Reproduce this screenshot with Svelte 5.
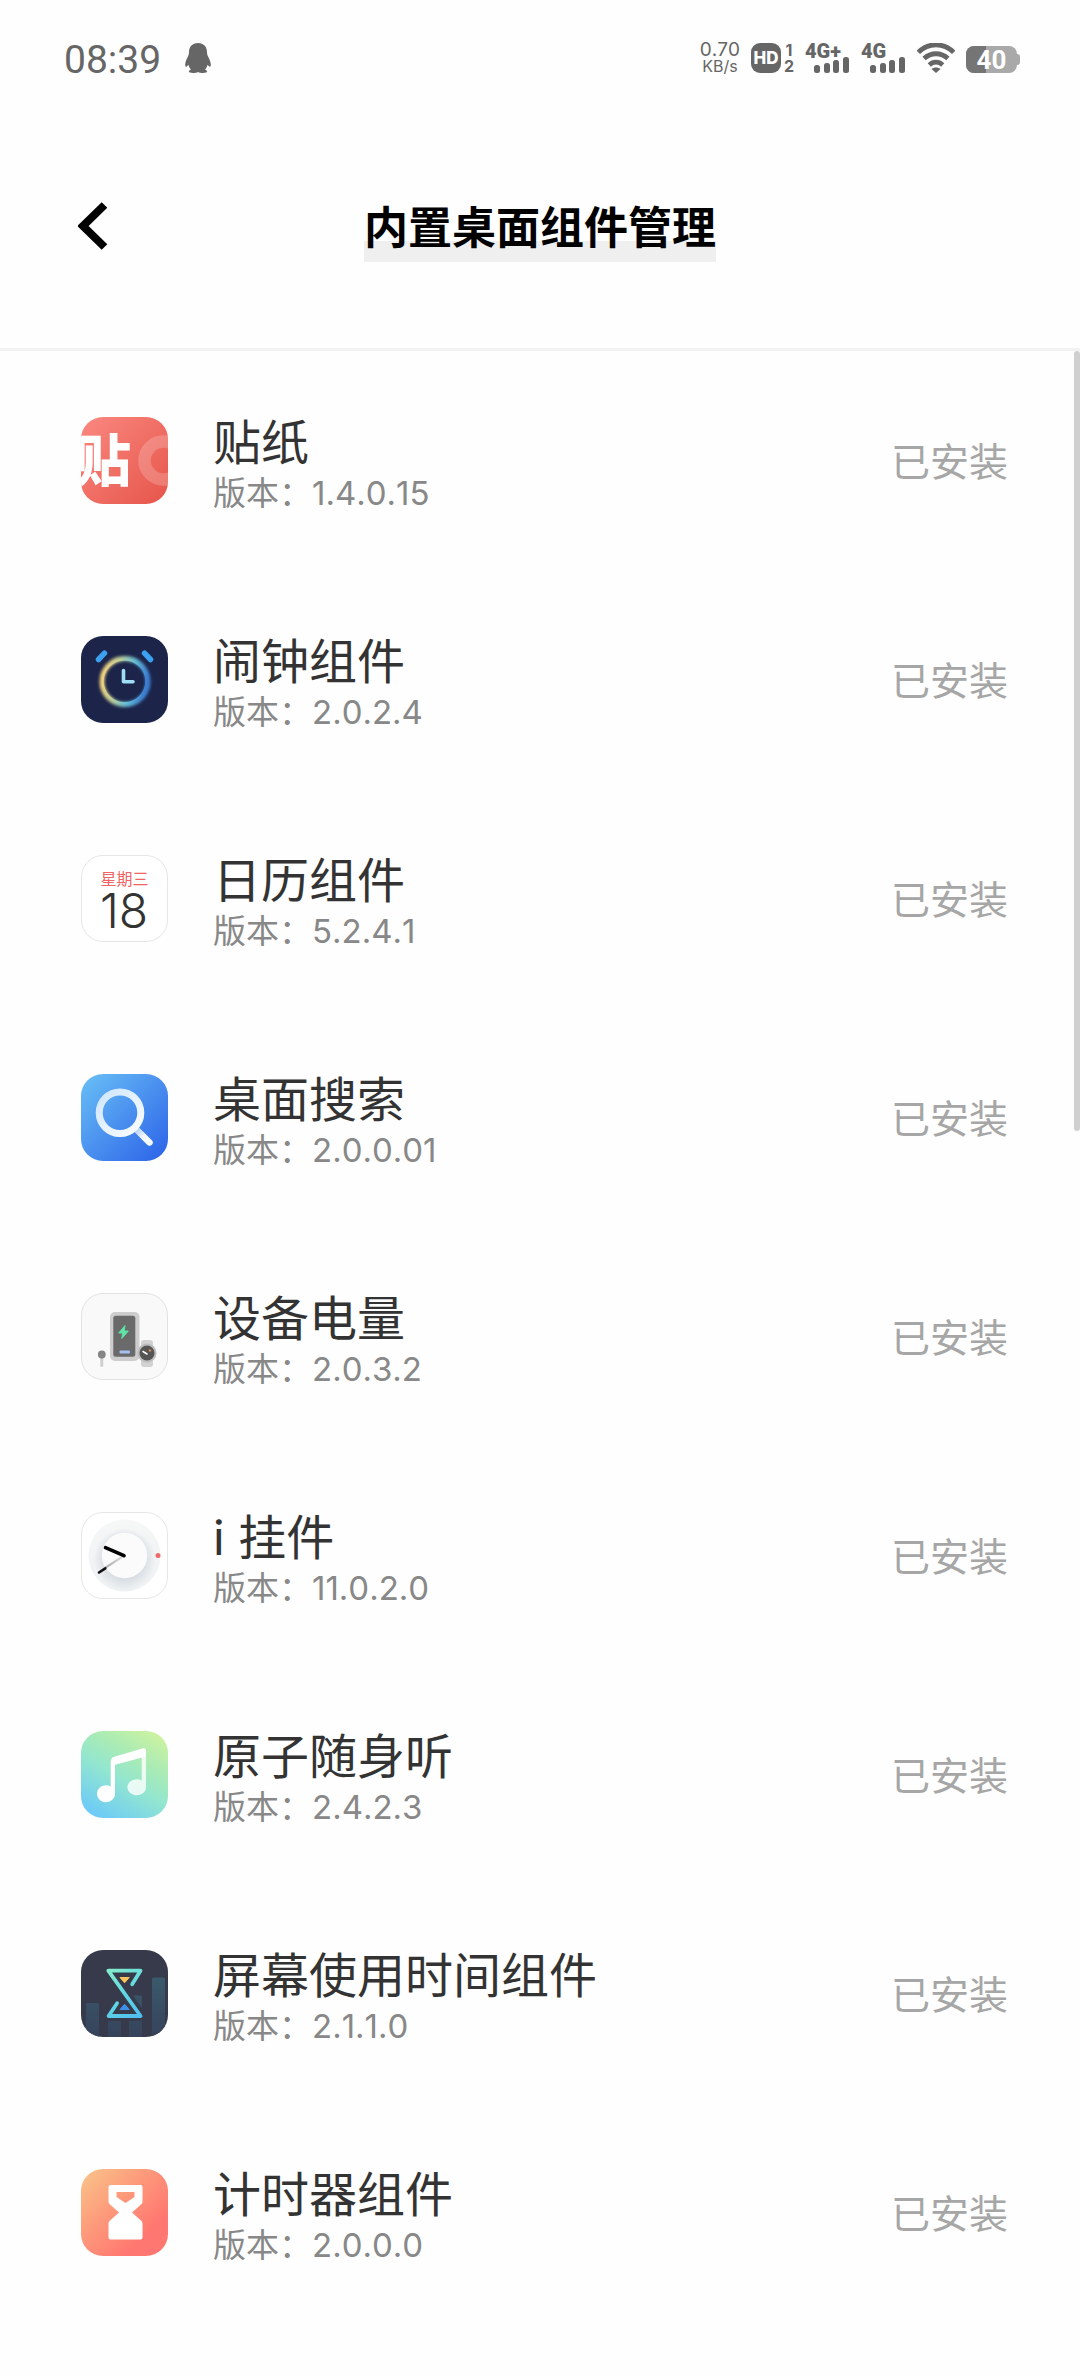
<script lang="ts">
  interface WidgetItem {
    id: string;
    name: string;
    version: string;
  }

  const widgets: WidgetItem[] = [
    { id: 'sticker', name: '贴纸', version: '1.4.0.15' },
    { id: 'alarm', name: '闹钟组件', version: '2.0.2.4' },
    { id: 'calendar', name: '日历组件', version: '5.2.4.1' },
    { id: 'search', name: '桌面搜索', version: '2.0.0.01' },
    { id: 'battery', name: '设备电量', version: '2.0.3.2' },
    { id: 'clock', name: 'i 挂件', version: '11.0.2.0' },
    { id: 'music', name: '原子随身听', version: '2.4.2.3' },
    { id: 'screentime', name: '屏幕使用时间组件', version: '2.1.1.0' },
    { id: 'timer', name: '计时器组件', version: '2.0.0.0' },
  ];

  const signals = ['4G+', '4G'];
</script>

<div class="page">
  <div class="status-bar">
    <span class="time">08:39</span>
    <svg class="penguin" viewBox="0 0 26 30" width="26" height="30">
      <path d="M13 0C7.500 0 4 3.800 4 9c0 1.200-.1 2.300-.6 3.400C2 15.400.2 18.500.2 21.500c0 1.300.3 2.300.8 2.300.8 0 1.700-1.200 2.400-2 .5 1.900 1.300 3.500 2.500 4.800-1.300.5-2 1.200-2 2 0 1.100 1.500 1.400 4 1.400 2.300 0 4-.3 5.100-1 1.100.7 2.800 1 5.100 1 2.500 0 4-.3 4-1.400 0-.8-.7-1.500-2-2 1.200-1.300 2-2.900 2.500-4.800.7.800 1.600 2 2.400 2 .5 0 .8-1 .8-2.300 0-3-1.800-6.100-3.200-9.100C22.100 11.300 22 10.200 22 9c0-5.200-3.500-9-9-9z" fill="#666" />
    </svg>

    <div class="indicators">
      <div class="speed">
        <span class="rate">0.70</span>
        <span class="unit">KB/s</span>
      </div>

      <div class="hd">
        <span class="hd-badge">HD</span>
        <span class="sims"><span>1</span><span>2</span></span>
      </div>

      {#each signals as label}
        <svg class="signal" viewBox="0 0 45 30" width="45" height="30">
          <text x="0" y="15" class="signal-label">{label}</text>
          <rect x="9" y="22" width="6" height="8" rx="2.500" />
          <rect x="19" y="20" width="6" height="10" rx="2.500" />
          <rect x="28" y="17" width="6" height="13" rx="2.500" />
          <rect x="38" y="14" width="6" height="16" rx="2.500" />
        </svg>
      {/each}

      <svg class="wifi" viewBox="0 0 38 30" width="38" height="30" fill="none" stroke="#666" stroke-width="4.800">
        <path d="M1.300 9.300C11.500-.7 26.500-.7 36.700 9.300" />
        <path d="M7.100 15.600c6.900-6.500 16.900-6.500 23.800 0" />
        <path d="M12.300 21.900c3.900-3.600 9.500-3.600 13.400 0" />
        <path d="M14.500 26c2.600-2 6.400-2 9 0L19 30z" fill="#666" stroke="none" />
      </svg>

      <div class="battery">
        <span class="battery-level" style="width: 40%"></span>
        <span class="battery-text">40</span>
      </div>
    </div>
  </div>

  <header class="header">
    <button class="back" aria-label="返回">
      <svg viewBox="0 0 30 48" width="30" height="48">
        <path d="M26.500 3 5 24l21.500 21" fill="none" stroke="#000" stroke-width="8" />
      </svg>
    </button>
    <h1 class="title">内置桌面组件管理</h1>
  </header>

  <main class="content">
    <ul class="list">
      {#each widgets as widget (widget.id)}
        <li class="row">
          <svg class="icon" viewBox="0 0 87 87" width="87" height="87" aria-hidden="true">
            {#if widget.id === 'sticker'}
              <defs>
                <linearGradient id="sticker-bg" x1="0" y1="0" x2="1" y2="1">
                  <stop offset="0" stop-color="#fa8880" />
                  <stop offset="1" stop-color="#e6554a" />
                </linearGradient>
                <clipPath id="sticker-clip"><rect width="87" height="87" rx="22" /></clipPath>
              </defs>
              <g clip-path="url(#sticker-clip)">
                <rect width="87" height="87" fill="url(#sticker-bg)" />
                <circle cx="82.500" cy="43.500" r="19" fill="none" stroke="#fff" stroke-opacity=".2" stroke-width="12.500" />
                <text x="-6" y="64" class="sticker-char">贴</text>
              </g>
            {:else if widget.id === 'alarm'}
              <defs>
                <linearGradient id="alarm-ring" x1="0" y1=".3" x2="1" y2=".5">
                  <stop offset="0" stop-color="#f2cf7c" />
                  <stop offset=".3" stop-color="#c3cf95" />
                  <stop offset=".65" stop-color="#65bfd6" />
                  <stop offset="1" stop-color="#3c7fd6" />
                </linearGradient>
                <filter id="alarm-glow" x="-30%" y="-30%" width="160%" height="160%">
                  <feGaussianBlur stdDeviation="1.800" />
                </filter>
              </defs>
              <rect width="87" height="87" rx="22" fill="#1c2449" />
              <circle cx="44" cy="45.500" r="23" fill="none" stroke="url(#alarm-ring)" stroke-width="5" filter="url(#alarm-glow)" />
              <circle cx="43.500" cy="45.300" r="21.800" fill="none" stroke="url(#alarm-ring)" stroke-width="2" />
              <path d="M17.500 23.500l6-6.300M63.500 17.200l6 6.300" stroke="#3ba0f0" stroke-width="5.500" stroke-linecap="round" />
              <path d="M42.500 34.500v11.200H52" fill="none" stroke="#9fdcf5" stroke-width="3.600" stroke-linecap="round" stroke-linejoin="round" />
            {:else if widget.id === 'calendar'}
              <rect x=".5" y=".5" width="86" height="86" rx="21.500" fill="#fff" stroke="#e6e6e6" />
              <text x="43.500" y="30" class="calendar-week">星期三</text>
              <text x="43" y="73" class="calendar-day">18</text>
            {:else if widget.id === 'search'}
              <defs>
                <linearGradient id="search-bg" x1="0" y1="0" x2="1" y2="1">
                  <stop offset="0" stop-color="#69c0f6" />
                  <stop offset=".5" stop-color="#4a90ef" />
                  <stop offset="1" stop-color="#2b62e8" />
                </linearGradient>
                <linearGradient id="search-lens" x1="0" y1="0" x2="1" y2="1">
                  <stop offset="0" stop-color="#cfe6fd" />
                  <stop offset="1" stop-color="#fbfdff" />
                </linearGradient>
                <linearGradient id="search-handle" x1="0" y1="0" x2="1" y2="1">
                  <stop offset="0" stop-color="#a9ccf8" />
                  <stop offset=".6" stop-color="#f4f9ff" />
                </linearGradient>
              </defs>
              <rect width="87" height="87" rx="22" fill="url(#search-bg)" />
              <path d="M54.500 54.500l14 14" stroke="url(#search-handle)" stroke-width="6.500" stroke-linecap="round" />
              <circle cx="39" cy="38.700" r="20.800" fill="none" stroke="url(#search-lens)" stroke-width="7" />
            {:else if widget.id === 'battery'}
              <rect x=".5" y=".5" width="86" height="86" rx="21.500" fill="#f9f9f9" stroke="#e2e2e2" />
              <rect x="29" y="19" width="29.500" height="49" rx="5" fill="#cdcdcd" />
              <rect x="32.300" y="22.700" width="22" height="41" rx="2.500" fill="#6a6a6a" />
              <path d="M44 32.500l-6.300 7.500h4l-.9 5.500 6.500-7.500h-4.200z" fill="#5fe5a5" stroke="#5fe5a5" stroke-linejoin="round" />
              <rect x="38.500" y="57.500" width="10.500" height="3" rx="1" fill="#a5c0f0" />
              <rect x="60" y="47" width="12" height="27" rx="3" fill="#d2d2d2" />
              <circle cx="66" cy="60" r="9.500" fill="#bdbdbd" />
              <circle cx="66" cy="60" r="7.500" fill="#555" />
              <path d="M62 58.500l4 2.500" stroke="#fff" stroke-width="1.500" stroke-linecap="round" />
              <circle cx="69" cy="57.500" r="1.200" fill="#d58a50" />
              <rect x="19.300" y="63" width="3" height="11" rx="1.500" fill="#cfcfcf" />
              <circle cx="20.800" cy="61.500" r="3.900" fill="#858585" />
            {:else if widget.id === 'clock'}
              <defs>
                <linearGradient id="clock-face" x1="0" y1="0" x2="0" y2="1">
                  <stop offset="0" stop-color="#f6f7f7" />
                  <stop offset="1" stop-color="#eef1f3" />
                </linearGradient>
                <radialGradient id="clock-shadow">
                  <stop offset=".65" stop-color="#d5dce2" stop-opacity=".9" />
                  <stop offset="1" stop-color="#d5dce2" stop-opacity="0" />
                </radialGradient>
                <linearGradient id="clock-minute" x1="1" y1="0" x2="0" y2="1">
                  <stop offset="0" stop-color="#ddd" />
                  <stop offset="1" stop-color="#aaa" />
                </linearGradient>
              </defs>
              <rect x=".5" y=".5" width="86" height="86" rx="21.500" fill="#fff" stroke="#e6e6e6" />
              <circle cx="43.500" cy="43.500" r="36" fill="url(#clock-face)" />
              <circle cx="43.500" cy="47" r="31" fill="url(#clock-shadow)" />
              <circle cx="43.500" cy="43.500" r="22.700" fill="#fbfbfb" />
              <path d="M43 43.700L24.500 55.700" stroke="url(#clock-minute)" stroke-width="2.200" />
              <path d="M24.300 56.300l-6.300 4.200" stroke="#111" stroke-width="2.600" stroke-linecap="round" />
              <path d="M24.500 35.700l18.500 8" stroke="#000" stroke-width="3.600" stroke-linecap="round" />
              <circle cx="77" cy="43.500" r="2.500" fill="#f06a6a" />
            {:else if widget.id === 'music'}
              <defs>
                <linearGradient id="music-bg" x1=".2" y1="1" x2=".8" y2="0">
                  <stop offset="0" stop-color="#6ccaf8" />
                  <stop offset=".45" stop-color="#93e6cf" />
                  <stop offset=".7" stop-color="#a9ebb5" />
                  <stop offset="1" stop-color="#cbf2a2" />
                </linearGradient>
              </defs>
              <rect width="87" height="87" rx="22" fill="url(#music-bg)" />
              <path d="M60.700 22H65v34a9.300 8 0 1 1-4.300-6.500z" fill="#fff" fill-opacity=".8" />
              <path d="M29.700 31q0-4 3.500-5.200L61.500 17.500q3.500-1 3.500 2.500v5.500L34 33.800V62a9 8.500 0 1 1-4.300-6.500z" fill="#fff" />
            {:else if widget.id === 'screentime'}
              <defs>
                <linearGradient id="screen-bar" x1="0" y1="27" x2="0" y2="87" gradientUnits="userSpaceOnUse">
                  <stop offset="0" stop-color="#3b5a6c" />
                  <stop offset="1" stop-color="#36435a" />
                </linearGradient>
                <linearGradient id="screen-glass" x1="27" y1="20" x2="58" y2="67" gradientUnits="userSpaceOnUse">
                  <stop offset="0" stop-color="#84eccb" />
                  <stop offset=".5" stop-color="#62d8e2" />
                  <stop offset="1" stop-color="#4fbdf0" />
                </linearGradient>
                <clipPath id="screen-clip"><rect width="87" height="87" rx="22" /></clipPath>
              </defs>
              <g clip-path="url(#screen-clip)">
                <rect width="87" height="87" fill="#363a4b" />
                <path d="M5 54.500q0-1.500 1.500-1.500h10q1.500 0 1.500 1.500V87H5zM27 71h13v16H27zM48 71h13v16H48zM52 45.500h7.500q1.500 0 1.500 1.500v11zM71 29q0-1.500 1.500-1.500h10Q84 27.500 84 29v58H71z" fill="url(#screen-bar)" />
                <path d="M51.200 34.300l8.300-13.600H27.300L59.600 66h-32l8.500-12.800" fill="none" stroke="url(#screen-glass)" stroke-width="3.800" stroke-linecap="round" stroke-linejoin="round" />
                <path d="M39 27.500h9.200l-4.600 5.300z" fill="#fbc45a" stroke="#fbc45a" stroke-linejoin="round" />
                <path d="M39 59.500h9.200l-4.600-5.300z" fill="#3d8fe8" stroke="#3d8fe8" stroke-linejoin="round" />
              </g>
            {:else}
              <defs>
                <linearGradient id="timer-bg" x1="0" y1="0" x2=".75" y2=".75">
                  <stop offset="0" stop-color="#f9c68a" />
                  <stop offset=".5" stop-color="#fd9c7c" />
                  <stop offset="1" stop-color="#ff7770" />
                </linearGradient>
              </defs>
              <rect width="87" height="87" rx="22" fill="url(#timer-bg)" />
              <path fill-rule="evenodd" d="M29.500 16h30q2 0 2 2v14.500q0 1.500-1 2.500L51 43.500l9.500 8.500q1 1 1 2.500v14q0 2-2 2h-30q-2 0-2-2v-14q0-1.500 1-2.500l9.500-8.500-9.500-8.500q-1-1-1-2.500V18q0-2 2-2zM35.500 23v5l9 6 9-6v-5z" fill="#fff" />
            {/if}
          </svg>

          <div class="info">
            <span class="name">{widget.name}</span>
            <span class="version">版本：{widget.version}</span>
          </div>
          <span class="state">已安装</span>
        </li>
      {/each}
    </ul>
    <div class="scrollbar"></div>
  </main>
</div>

<style>
  :global(body) {
    margin: 0;
    background: #fefefe;
  }
  .page {
    display: flex;
    flex-direction: column;
    min-height: 100vh;
    font-family: Inter, 'Noto Sans CJK SC', sans-serif;
    font-kerning: none;
    color: #333;
  }

  /* Status bar */
  .status-bar {
    display: flex;
    align-items: center;
    height: 30px;
    padding: 43px 60px 31px 64px;
    color: #666;
  }
  .time {
    padding-top: 4px;
    font-family: Roboto, sans-serif;
    font-size: 39px;
    line-height: 30px;
  }
  .penguin {
    margin-left: 24px;
  }
  .indicators {
    display: flex;
    align-items: center;
    gap: 11px;
    margin-left: auto;
  }
  .speed {
    display: flex;
    flex-direction: column;
    align-items: center;
  }
  .rate {
    font-size: 19px;
    line-height: 15px;
  }
  .unit {
    font-size: 16px;
    line-height: 18px;
  }
  .hd {
    display: flex;
    gap: 3px;
  }
  .hd-badge {
    width: 30px;
    border-radius: 9px;
    background: #666;
    color: #fff;
    font-size: 17px;
    font-weight: 800;
    line-height: 30px;
    text-align: center;
  }
  .sims {
    display: flex;
    flex-direction: column;
    justify-content: space-between;
    width: 10px;
    font-size: 16px;
    font-weight: 700;
    line-height: 14px;
    text-align: center;
  }
  .signal {
    overflow: visible;
    fill: #666;
  }
  .signal-label {
    font-family: Roboto, sans-serif;
    font-size: 20px;
    font-weight: 900;
  }
  .battery {
    position: relative;
    display: flex;
    align-items: center;
    justify-content: center;
    width: 51px;
    height: 27px;
    margin: 3px 3px 0 0;
    border-radius: 8px;
    background: #a9a9a9;
  }
  .battery::after {
    content: '';
    position: absolute;
    top: 8px;
    right: -3px;
    width: 3px;
    height: 11px;
    border-radius: 0 3px 3px 0;
    background: #a9a9a9;
  }
  .battery-level {
    position: absolute;
    top: 0;
    bottom: 0;
    left: 0;
    border-radius: 8px 0 0 8px;
    background: #757575;
  }
  .battery-text {
    position: relative;
    font-family: Roboto, sans-serif;
    font-size: 26px;
    font-weight: 700;
    line-height: 28px;
    color: #fff;
  }

  /* Header */
  .header {
    display: grid;
    grid-template-columns: 1fr auto 1fr;
    align-items: center;
    height: 244px;
    padding: 0 78px;
    border-bottom: 3px solid #f2f2f2;
  }
  .back {
    justify-self: start;
    display: flex;
    padding: 0;
    border: none;
    background: none;
    cursor: pointer;
  }
  .title {
    margin: 0;
    padding-top: 4px;
    font-size: 44px;
    font-weight: 700;
    line-height: 68px;
    color: #000;
    background: linear-gradient(#efefef, #efefef) no-repeat bottom / 100% 21px;
  }

  /* Widget list */
  .content {
    position: relative;
    flex: 1;
  }
  .list {
    margin: 0;
    padding: 0;
    list-style: none;
  }
  .row {
    display: flex;
    align-items: center;
    height: 219px;
    padding: 0 72px 0 81px;
  }
  .icon {
    flex-shrink: 0;
  }
  .info {
    display: flex;
    flex: 1;
    flex-direction: column;
    margin-left: 45px;
    padding-top: 8px;
  }
  .name {
    font-size: 48px;
    line-height: 56px;
  }
  .version {
    font-size: 33px;
    line-height: 44px;
    color: #888;
  }
  .state {
    padding-bottom: 4px;
    font-size: 39px;
    color: #a6a6a6;
  }
  .sticker-char {
    font-family: 'Noto Sans CJK SC', sans-serif;
    font-size: 56px;
    font-weight: 900;
    fill: #fff;
  }
  .calendar-week {
    font-size: 16px;
    fill: #f06464;
    text-anchor: middle;
  }
  .calendar-day {
    font-size: 48px;
    font-weight: 300;
    fill: #333;
    text-anchor: middle;
  }
  .scrollbar {
    position: absolute;
    top: 0;
    right: 0;
    width: 6px;
    height: 38.5%;
    border-radius: 3px;
    background: #d0d0d0;
  }
</style>
